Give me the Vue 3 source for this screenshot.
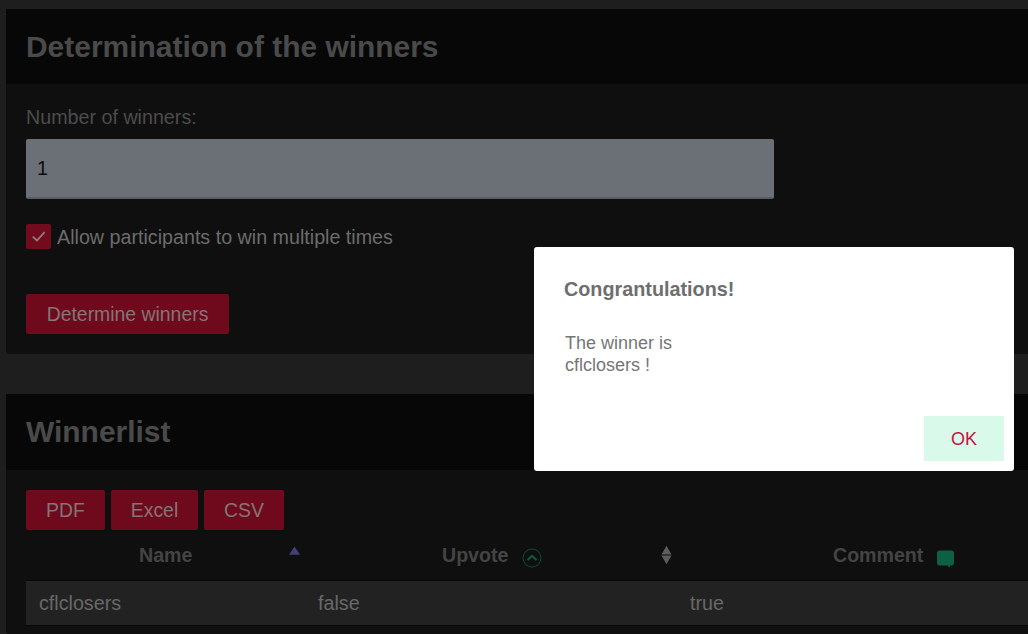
<script setup>
const exportButtons = ['PDF', 'Excel', 'CSV']
</script>

<template>
  <div class="page">
    <section class="card first">
      <h2 class="card-head">Determination of the winners</h2>
      <div class="card-body">
        <label class="field-label">Number of winners:</label>
        <div class="input">1</div>
        <div class="check-row">
          <span class="check">
            <svg width="18" height="18" viewBox="0 0 16 16"><path d="M2.5 8.5 6.2 12 13 4.5" fill="none" stroke="#8f7b80" stroke-width="1.6"/></svg>
          </span>
          <span class="check-text">Allow participants to win multiple times</span>
        </div>
        <button class="btn determine">Determine winners</button>
      </div>
    </section>

    <section class="card second">
      <h2 class="card-head">Winnerlist</h2>
      <div class="card-body list">
        <div class="btn-row">
          <button v-for="b in exportButtons" :key="b" class="btn">{{ b }}</button>
        </div>
        <div class="thead">
          <div class="th name">Name
            <svg class="sort-up" width="11" height="9" viewBox="0 0 12 9"><path d="M6 0 12 9H0Z" fill="#443f7c"/></svg>
          </div>
          <div class="th upvote">Upvote
            <svg class="up-icon" width="20" height="20" viewBox="0 0 20 20"><circle cx="10" cy="10" r="9" fill="none" stroke="#0f4a36" stroke-width="1"/><path d="M5.5 12 10 7.8 14.5 12" fill="none" stroke="#0f5c42" stroke-width="2"/></svg>
            <svg class="sort-both" width="11" height="20" viewBox="0 0 12 20"><path d="M6 0 11.5 9.5H.5ZM6 20 .5 10.5h11Z" fill="#5c5c5c"/></svg>
          </div>
          <div class="th comment">Comment
            <svg class="chat" width="17" height="18" viewBox="0 0 18 18"><path d="M3 0h12a3 3 0 0 1 3 3v10a3 3 0 0 1-3 3h-1l-1 2-2-2H3a3 3 0 0 1-3-3V3a3 3 0 0 1 3-3Z" fill="#0d6045"/></svg>
          </div>
        </div>
        <div class="row">
          <span class="c1">cflclosers</span>
          <span class="c2">false</span>
          <span class="c3">true</span>
        </div>
      </div>
    </section>

    <div class="overlay">
      <div class="modal">
        <h3>Congrantulations!</h3>
        <p>The winner is<br>cflclosers !</p>
        <div class="modal-foot"><button class="ok">OK</button></div>
      </div>
    </div>
  </div>
</template>

<style>
html, body { margin: 0; background: #1e1e1e; overflow: hidden; }
</style>

<style scoped>
.page {
  position: relative;
  height: 634px;
  overflow: hidden;
  padding: 9px 0 0 6px;
  box-sizing: border-box;
  background: #1e1e1e;
  font-family: "Liberation Sans", Arial, sans-serif;
  font-size: 19.7px;
  color: #6e6e6e;
}
.card { background: #0f0f0f; border-radius: 3px 0 0 3px; }
.first { height: 345px; }
.second { margin-top: 40px; height: 240px; }
.card-head {
  margin: 0;
  height: 75px;
  padding: 0 20px;
  background: #070707;
  color: #4a4a4a;
  font-size: 29.95px;
  line-height: 75px;
  font-weight: 700;
}
.second .card-head { height: 76px; }
.card-body { padding: 20px; }
.field-label { display: block; line-height: 24px; margin-top: 1px; color: #4c4c4c; }
.input {
  width: 748px;
  height: 60px;
  margin-top: 10px;
  padding-left: 11px;
  box-sizing: border-box;
  background: #6b6f76;
  border-bottom: 2px solid #5a5d63;
  border-radius: 2px;
  color: #0b0b0d;
  line-height: 58px;
}
.check-row { display: flex; align-items: center; gap: 6px; margin-top: 24px; line-height: 26px; color: #6c6c6c; }
.check-text { position: relative; top: 1px; }
.check {
  width: 25px; height: 25px; border-radius: 2px; background: #720b1e;
  display: flex; align-items: center; justify-content: center;
}
.btn {
  height: 40px;
  padding: 0;
  border: 0;
  border-radius: 2px;
  background: #6e0a1c;
  color: #857478;
  font: inherit;
  font-size: 19.4px;
}
.determine { display: block; width: 203px; margin-top: 45px; }
.list { padding-top: 20px; }
.btn-row { display: grid; grid-template-columns: 79px 87px 80px; gap: 6px; }
.thead { position: relative; height: 50px; margin-top: 0; width: 1002px; font-weight: 700; color: #444; font-size: 19.6px; }
.th { position: absolute; top: 13px; line-height: 24px; }
.name { left: 113px; }
.upvote { left: 416px; }
.comment { left: 807px; }
.sort-up { position: absolute; left: 150px; top: 3px; }
.up-icon { position: absolute; left: 80px; top: 5px; }
.sort-both { position: absolute; left: 219px; top: 2px; }
.chat { position: absolute; left: 104px; top: 7px; }
.row {
  position: relative;
  height: 44px;
  width: 1002px;
  background: #222;
  border-top: 1px solid #090909;
  border-bottom: 1px solid #090909;
  line-height: 44px;
  color: #686868;
}
.row span { position: absolute; top: 0; }
.c1 { left: 13px; }
.c2 { left: 292px; }
.c3 { left: 664px; }
.overlay { position: absolute; inset: 0; pointer-events: none; }
.modal {
  position: absolute;
  left: 534px;
  top: 247px;
  width: 480px;
  height: 224px;
  box-sizing: border-box;
  background: #fff;
  border-radius: 3px;
  padding: 30px;
  color: #757575;
  font-size: 18px;
}
.modal h3 { margin: 0; font-size: 19.8px; line-height: 24px; color: #6e6e6e; }
.modal p { margin: 32px 0 0 1px; line-height: 21.5px; }
.modal-foot { position: absolute; right: 10px; bottom: 10px; }
.ok {
  display: block;
  width: 80px;
  height: 45px;
  padding: 2px 0 0;
  border: 0;
  background: #d9f9ea;
  color: #cc1040;
  font: inherit;
  font-size: 18px;
}
</style>
